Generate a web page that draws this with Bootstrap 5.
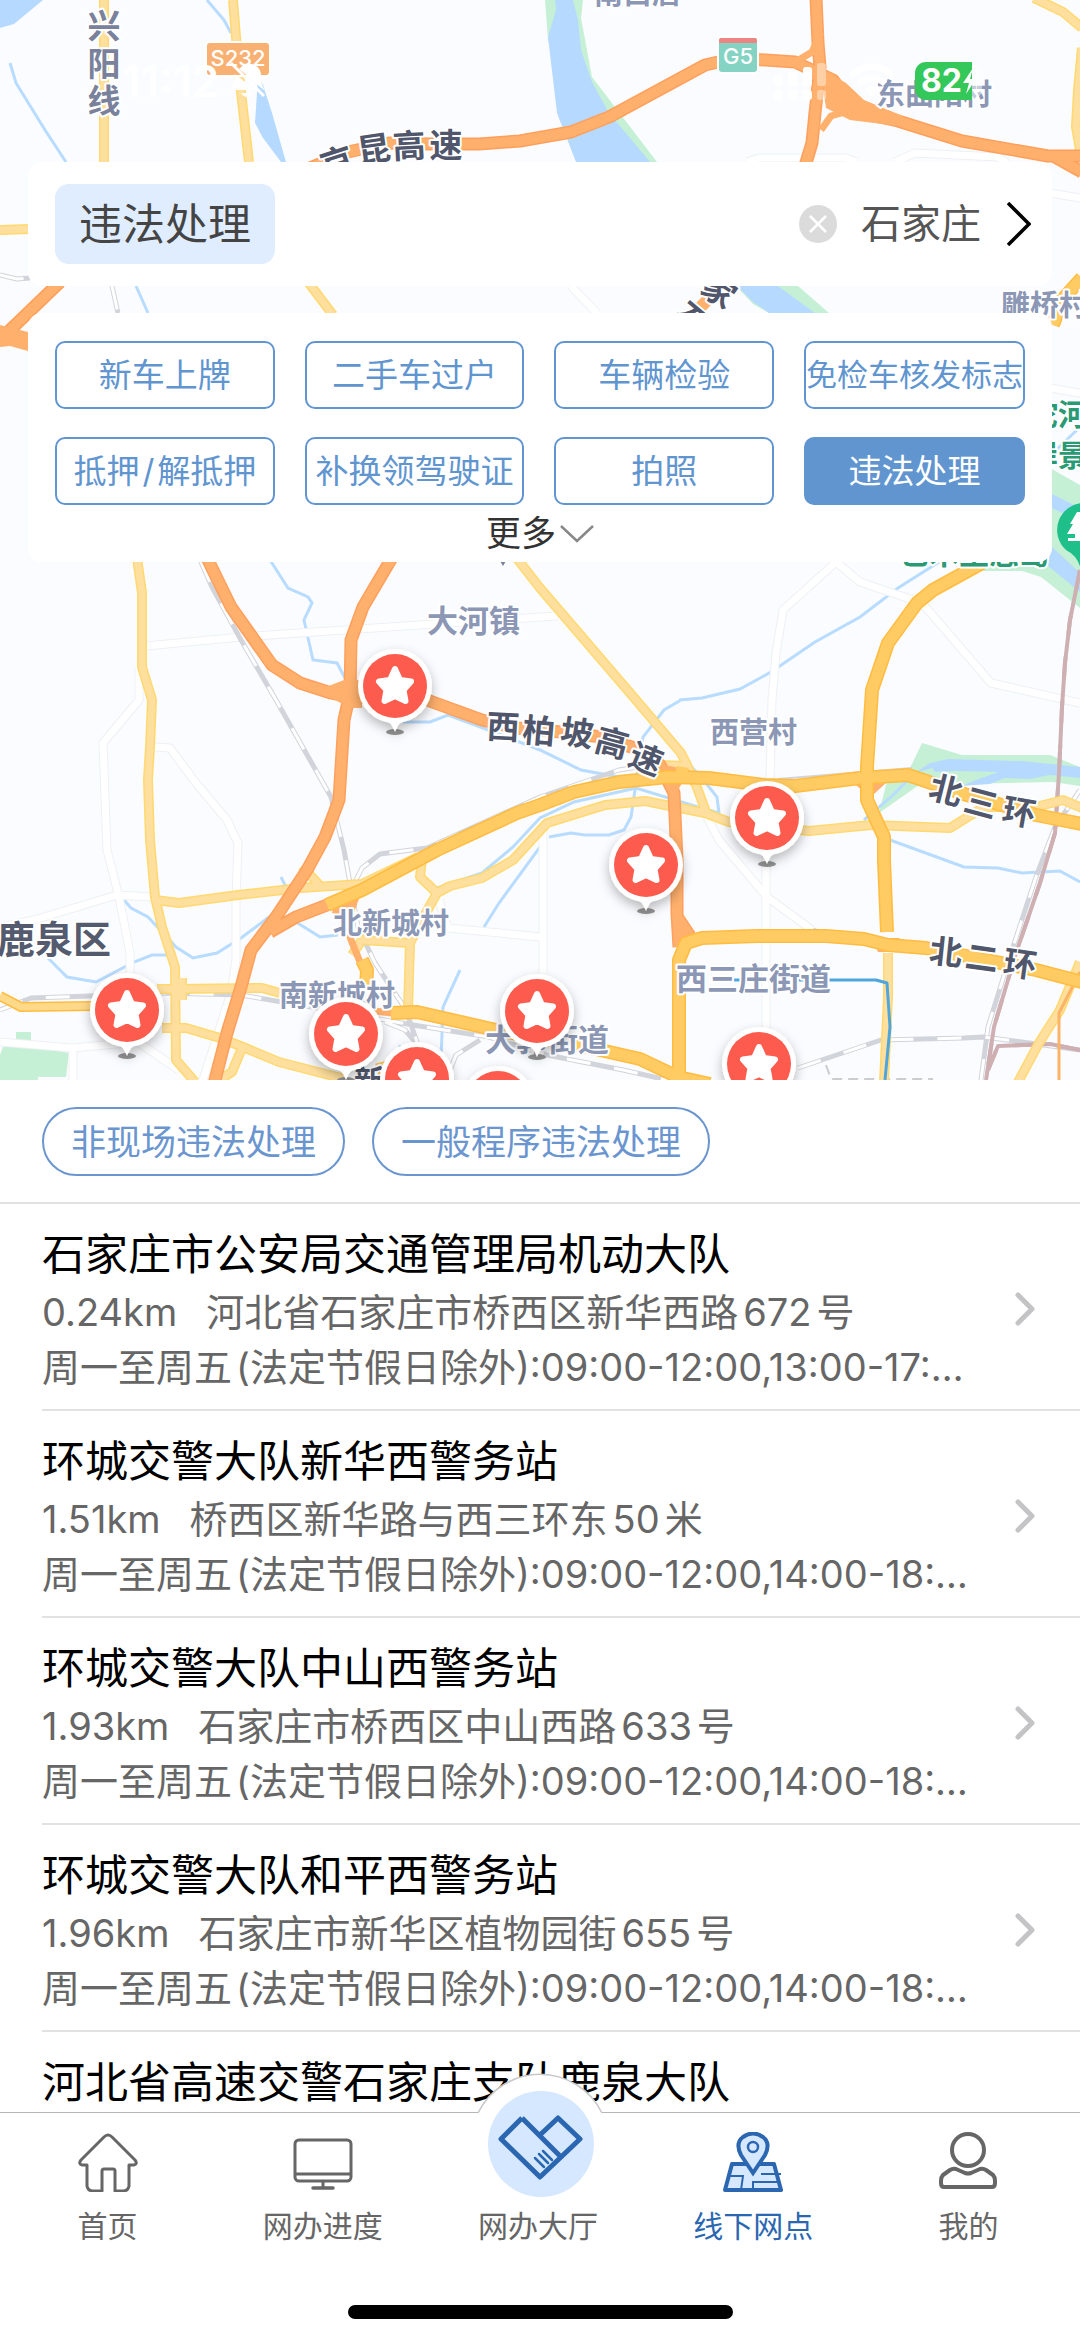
<!DOCTYPE html>
<html lang="zh-CN">
<head>
<meta charset="utf-8">
<meta name="viewport" content="width=device-width, initial-scale=1">
<title>线下网点</title>
<link href="https://cdn.jsdelivr.net/npm/bootstrap@5.3.0/dist/css/bootstrap.min.css" rel="stylesheet">
<style>
  :root { --accent: #6195d0; --deep: #2b67b1; --line: #e2e2e2; }
  body { font-family: Inter, "Noto Sans CJK SC", sans-serif; background: #fff; color: #000; }
  button { font-family: inherit; }

  .map-area { height: 1080px; background: #fbfcff; }
  .map-canvas { width: 100%; height: 100%; }

  .status-bar { height: 162px; padding: 0 98px 0 122px; color: #fff; }
  .status-time { font-size: 44px; line-height: 48px; font-weight: 600; }
  .status-signals { gap: 20px; }
  .battery { width: 67px; height: 38px; border-radius: 11px; background: linear-gradient(90deg, #34c759 57px, rgba(255,255,255,.5) 57px); font-size: 32px; line-height: 38px; font-weight: 700; padding-left: 6px; }

  .float-panel { margin: 0 28px; background: #fff; border-radius: 14px; padding: 0 27px; }
  .search-panel { height: 124px; padding-right: 21px; }
  .keyword { background: #e0edfe; color: #444; border-radius: 14px; font-size: 43px; line-height: 80px; padding: 0 24px; }
  .city-btn { color: #555; font-size: 40px; line-height: 60px; gap: 26px; }

  .filter-panel { margin-top: 27px; padding-top: 28px; }
  .filter-grid { display: grid; grid-template-columns: repeat(4, 1fr); gap: 28px 30px; }
  .filter-btn { height: 68px; padding: 0; border: 2px solid var(--accent); border-radius: 10px; color: var(--accent); background: #fff; font-size: 33px; line-height: 62px; white-space: nowrap; }
  .filter-btn.tight { font-size: 31px; }
  .filter-btn.active { background: var(--accent); color: #fff; border-color: var(--accent); }
  .slash { margin: 0 3px; }
  .more-btn { font-size: 35px; line-height: 57px; color: #333; }

  .kind-row { padding: 27px 42px 26px; gap: 27px; border-bottom: 2px solid var(--line); }
  .kind-btn { height: 69px; padding: 0 27px; border: 2px solid #6a95cf; border-radius: 35px; color: #6a95cf; font-size: 35px; line-height: 60px; }

  .office { padding-left: 42px; color: #000; }
  .office-in { padding: 19px 45px 14px 0; border-bottom: 2px solid var(--line); gap: 38px; }
  .office-name { font-size: 43px; line-height: 62px; }
  .office-line { font-size: 38px; line-height: 55px; color: #666; }
  .office-addr { margin-left: 29px; }
  .num { margin: 0 5px; }

  .tab-bar { height: 229px; border-top: 1px solid #b5b5b5; background: #fff; }
  .tab-row { padding-right: 4px; }
  .tab-link { flex: 1 1 0; padding-top: 19px; color: #666; font-size: 30px; line-height: 40px; gap: 14px; }
  .tab-link.active { color: var(--deep); }
  .tab-icon { width: 60px; height: 60px; }
  .hub-bump { position: absolute; left: 50%; top: -40px; margin-left: -70px; }
  .home-bar { width: 385px; height: 14px; border-radius: 7px; background: #000; margin-top: 59px; }

  .edge-light { stroke: #ffd970; } .fill-light { stroke: #ffdf9e; }
  .edge-gold { stroke: #ffbc40; } .fill-gold { stroke: #ffcb62; }
  .edge-hwy { stroke: #ff9f5c; } .fill-hwy { stroke: #ffb06c; }
  .edge-minor { stroke: #eef0f4; } .fill-minor { stroke: #fff; }
  .halo { paint-order: stroke; stroke: #fff; stroke-width: 4px; stroke-linejoin: round; font-family: "Noto Sans CJK SC", sans-serif; font-weight: 700; }
  .village { fill: #8b97b5; font-size: 29px; }
  .town { fill: #8b97b5; font-size: 31px; }
  .road-name { fill: #50566b; font-size: 33px; text-anchor: middle; }
  .scenic { fill: #2a9a74; font-size: 30px; }
  .sign-text { fill: #fff; font-size: 22px; text-anchor: middle; font-family: Inter, sans-serif; font-weight: 500; }
</style>
<script src="https://cdn.jsdelivr.net/npm/bootstrap@5.3.0/dist/js/bootstrap.bundle.min.js"></script>
</head>
<body>
<div class="vh-100 d-flex flex-column overflow-hidden">

  <section class="map-area position-relative flex-shrink-0 overflow-hidden">
    <svg class="map-canvas position-absolute top-0 start-0" viewBox="0 0 1080 1080" preserveAspectRatio="xMidYMin slice" aria-label="地图">
      <defs>
        <g id="minor">
          <path d="M146 646L241 637L344 630L557 616M139 667L139 700L103 743L107 850L119 897L130 953V983M155 747L170 748L196 783L227 820L238 843L236 900V960L231 993L203 1080M0 927L34 920L117 895L152 897"/>
          <path d="M836 562L783 610L776 653L772 700L770 780L766 860V1030M836 562L860 582L922 603L991 683L1080 703M707 817L719 840L767 897L812 930M543 830V973M439 900L448 928L540 937M0 1042L72 1048L138 1042L179 1070M73 1050V1080"/>
          <path d="M747 162L759 158H846L856 162M895 162L915 153L998 157L1008 164M1050 193L1080 198M571 286L597 313M1050 388L1080 393"/>
        </g>
        <g id="light">
          <path d="M104 0V162M233 0L236 37L240 83L249 162M308 282L333 315M515 556L540 588L636 700L681 753L687 765L698 790L707 815M0 230L30 229M1034 -2L1063 12L1082 28M1082 48L1078 90L1076 127L1080 150"/>
          <path d="M137 558L142 593V667L152 700L150 747L148 780L150 840L155 897L162 927L175 967L176 1060L195 1082"/>
          <path d="M155 900L179 903L238 895L300 888L362 884L418 857M302 866L322 888M422 858L420 877L437 893L422 920L410 943L362 940L352 955M410 943L408 1010M437 893L450 886L482 878L513 860L547 823L605 805L645 801L705 813L729 822L809 831L871 825L950 828L984 807L1036 807L1063 800L1082 808M660 765L687 766"/>
          <path d="M157 989H179L262 988L280 993M182 978V1000M162 1028H186L220 1038L243 1047L279 1062L345 1079M242 1048L232 1072L216 1082M888 953V997L884 1082M1080 962L1060 1010L1039 1043L1018 1082"/>
        </g>
        <g id="gold">
          <path d="M327 905L362 890L437 850L517 813L540 805L574 792L619 782L667 777L709 778L764 785L795 786L860 778L908 775L967 795L1036 815L1082 824"/>
          <path d="M982 563L933 590L917 603L888 643L872 690L867 767V800L884 837V860L887 932"/>
          <path d="M679 1082V960L686 943L702 938L757 936H826L864 939L888 945L926 948L1036 970L1082 982"/>
          <path d="M391 1013L417 1012L496 1030L578 1045L640 1059L678 1077L710 1084M362 960L367 970L366 990M382 1062L388 1084M1082 278L1062 300L1053 325"/>
        </g>
        <g id="hwy">
          <path d="M310 168L348 152L389 143L430 144H479L520 141L571 132L609 117L705 65L736 58L795 62L833 80L857 112L898 121L962 141L1048 156H1082M816 -2L818 43L820 67L815 113L812 143L805 166M1055 157L1082 172"/>
          <path d="M60 282L8 332M207 558L231 607L272 665L300 683L331 693L350 697L427 700L482 720L517 728L561 732L602 737L640 750L660 765L674 793L677 860V913L679 947M676 915L690 936"/>
          <path d="M393 556L363 607L351 640L350 693L344 720L339 800L325 837L307 870L276 917L251 950L241 987L227 1033L214 1084M270 932L296 917L327 905"/>
        </g>
        <g id="pin">
          <ellipse cy="46" rx="9" ry="3" fill="#949494"/>
          <g filter="url(#pinShadow)">
            <circle r="37" fill="#fff"/><path d="M-13 32Q-3 36 0 46Q3 36 13 32Z" fill="#fff"/>
          </g>
          <circle r="32" fill="#fc5b4d"/>
          <path d="M0 -17L5 -6L16 -4.500L8.500 4L10.500 15L0 10L-10.500 15L-8.500 4L-16 -4.500L-5 -6Z" fill="#fff" stroke="#fff" stroke-width="6" stroke-linejoin="round"/>
        </g>
        <filter id="pinShadow" x="-50%" y="-40%" width="200%" height="200%"><feDropShadow dx="0" dy="5" stdDeviation="6" flood-color="#000" flood-opacity=".28"/></filter>
      </defs>

      <!-- water and parks -->
      <g fill="#c6f0d5">
        <path d="M545 0H583L581 18L592 77L657 162H640L555 60L548 40Z"/>
        <path d="M736 286H798L829 313H769L753 304Z"/>
        <path d="M1050 468L1080 485V608L1041 577L1022 571H958L988 555L1050 507Z"/>
        <path d="M922 743L962 755H1050L1080 767V786L1053 782L919 785L879 813L888 777L910 768Z"/>
        <path d="M3 1047L31 1046L69 1053L66 1077H38V1080H0V1055ZM16 1032H31V1040H16Z"/>
      </g>
      <g fill="#b6daff">
        <path d="M0 0H43L14 24L0 28ZM258 78L255 123L263 138L281 162H286L272 113L263 85Z"/>
        <path d="M555 0L556 10L548 37L557 113L576 162H650L609 113L592 82L581 50L578 20L573 0Z"/>
        <path d="M737 286H778L815 313H769L753 302Z"/>
        <path d="M1050 493L1080 508V522L1050 507ZM1050 545L1080 573V592L1048 566Z"/>
        <path d="M915 773L930 763L948 759L1022 761L1080 767V778L1050 775L1030 779L1005 778L990 784L960 786L998 772L955 771L935 772L932 768Z"/>
      </g>
      <g fill="none" stroke="#b8dcff" stroke-width="3">
        <path d="M10 63L16 83L45 130L66 162M207 0L224 20L231 33M136 286L148 313M270 560L288 588L308 597L312 603L304 620L313 660L337 663L346 680M1080 427L1050 456"/>
        <path d="M124 900L131 908L148 917L176 947L193 958L217 953L241 938L269 917M48 958L67 977L96 982L134 962L152 955H176M281 877L290 895M296 922L320 937L338 935M441 1060L443 1007L460 970M484 927L499 903L540 847M437 888L482 873L513 847L540 818L574 802L636 788L698 807L719 813L717 797L705 782L681 755"/>
        <path d="M403 722H430L448 715L475 725L540 750L581 770L619 777M681 700L664 710L643 737L636 783L631 817L624 830L609 835H585L571 833L549 837M939 562L898 588L860 617L815 642L771 672L740 689L702 698L679 700M915 773L891 797L864 820M890 840L964 867L998 868L1022 873L1060 871L1080 882M812 928L824 934M400 1045V1080"/>
      </g>

      <!-- roads -->
      <g fill="none" stroke-linejoin="round">
        <use href="#minor" class="edge-minor" stroke-width="9"/><use href="#minor" class="fill-minor" stroke-width="7"/>
        <g stroke="#d2d4dc" stroke-width="5">
          <path id="railA" d="M112 286L118 313M200 560L212 587L241 640L276 700L331 797L344 850L358 927L375 963L406 1010L418 1045M0 275L17 279L30 278M0 1010L31 998L90 996L162 993L241 995L317 1008L413 1025L489 1037L547 1055L623 1070L667 1080M355 882L362 868L380 854L427 848L540 797L619 770L650 765M1080 790L1055 827L1036 877L1012 950L988 1027L981 1080M798 1068L881 1040L964 1038L984 1037L1022 1042L1080 1050M450 1070L456 1055L480 1040M385 1022L405 1030L418 1045"/>
          <path d="M778 779L912 768" stroke-width="2"/>
        </g>
        <use href="#railA" stroke="#fff" stroke-width="3" stroke-dasharray="24 24"/>
        <path id="railB" d="M1080 570L1070 620L1065 663L1062 707L1059 773L1055 833L1040 883L1016 953L994 1027L986 1080M1080 1050L1050 1044L998 1046L988 1070" stroke="#cfb0b2" stroke-width="4"/>
        <use href="#railB" stroke="#fff" stroke-width="2" stroke-dasharray="22 22"/>
        <path d="M826 1065L831 1079H933" stroke="#ccc" stroke-width="2" stroke-dasharray="10 6"/>
        <use href="#light" class="edge-light" stroke-width="10"/><use href="#light" class="fill-light" stroke-width="7"/>
        <path d="M0 996L21 1007L92 1006" class="edge-gold" stroke-width="10"/><path d="M0 996L21 1007L92 1006" stroke="#ffd98a" stroke-width="7"/>
        <path d="M733 980H876L887 983L890 1027L885 1080" stroke="#4ea6dc" stroke-width="3"/>
        <path d="M1080 972L1059 1013V1080" stroke="#fbb365" stroke-width="3"/>
        <use href="#hwy" class="edge-hwy" stroke-width="13"/><use href="#hwy" class="fill-hwy" stroke-width="10"/>
        <path d="M797 61L812 52L821 32M821 130L831 116L845 112M345 925L360 962M365 1010L392 1013" class="fill-hwy" stroke-width="7"/>
        <g fill="#ffb06c">
          <path d="M820 68L846 83L864 100L903 116L898 126L850 120L826 108Z"/><path d="M0 325L28 332V351L10 346L0 347Z"/>
          <path d="M326 687L344 680H362V708H350L335 700Z"/><path d="M336 895L364 885L352 918L332 913Z"/><path d="M856 785L886 783L874 794H866ZM872 938L900 938L890 952H878ZM665 765L690 770L678 790Z"/>
        </g>
        <use href="#gold" class="edge-gold" stroke-width="14"/><use href="#gold" class="fill-gold" stroke-width="11"/>
        <path d="M676 770L688 772" class="fill-gold" stroke-width="8"/>
      </g>

      <!-- shields and labels -->
      <rect x="206" y="42" width="64" height="34" rx="4" fill="#f8b073" stroke="#fff" stroke-width="2"/>
      <text class="sign-text" x="238" y="66">S232</text>
      <rect x="718" y="37" width="40" height="36" rx="4" fill="#84d3c3" stroke="#fff" stroke-width="2"/>
      <path d="M719 43V40Q719 38 721 38H755Q757 38 757 40V43Z" fill="#ed8683"/>
      <text class="sign-text" x="738" y="64">G5</text>

      <g class="halo">
        <g class="road-name">
          <g fill="#7a819b"><text x="104" y="38">兴</text><text x="104" y="76">阳</text><text x="104" y="113">线</text></g>
          <text transform="translate(337 162) rotate(-18)" y="12">京</text><text transform="translate(374 149) rotate(-8)" y="12">昆</text><text transform="translate(409 146) rotate(-3)" y="12">高</text><text x="446" y="157">速</text>
          <path d="M719 288L692 316" stroke="#ffb06c" stroke-width="12"/>
          <text transform="translate(719 291) rotate(35)" y="12">家</text><text transform="translate(692 320) rotate(40)" y="12">石</text>
          <text transform="translate(503 727) rotate(3)" y="12">西</text><text transform="translate(539 731) rotate(5)" y="12">柏</text><text transform="translate(577 733) rotate(8)" y="12">坡</text><text transform="translate(612 743) rotate(15)" y="12">高</text><text transform="translate(646 759) rotate(22)" y="12">速</text>
          <text transform="translate(946 790) rotate(14)" y="12">北</text><text transform="translate(981 803) rotate(15)" y="12">三</text><text transform="translate(1019 812) rotate(10)" y="12">环</text>
          <text transform="translate(946 952) rotate(6)" y="12">北</text><text transform="translate(982 958) rotate(8)" y="12">二</text><text transform="translate(1020 964) rotate(8)" y="12">环</text>
        </g>
        <g class="village">
          <text x="594" y="4">南白店</text><text x="876" y="105">东曲阳村</text><text x="1001" y="316">雕桥村</text>
          <text x="710" y="743">西营村</text><text x="333" y="934">北新城村</text><text x="279" y="1006">南新城村</text>
        </g>
        <g class="town">
          <text x="427" y="632">大河镇</text><text x="676" y="990">西三庄街道</text><text x="485" y="1051">大郭街道</text><text x="354" y="1092" fill="#50566b">新</text>
        </g>
        <text x="-3" y="953" fill="#555b6e" font-size="38">鹿泉区</text>
        <g class="scenic"><text x="1028" y="425">沱河</text><text x="1028" y="466">岸景</text><text x="899" y="564">艺术生态岛</text></g>
        <path d="M497 556H509L503 566Z" fill="#7a819b"/>
      </g>
      <path d="M1084 503A27 27 0 0 0 1066 550Q1078 556 1081 570H1084Z" fill="#1fbf8a"/>
      <path d="M1077 512L1070 524H1073L1067 534H1075V538H1068V541H1084V512Z" fill="#fff"/>

      <use href="#pin" x="395" y="686"/><use href="#pin" x="767" y="818"/><use href="#pin" x="646" y="865"/>
      <use href="#pin" x="127" y="1010"/><use href="#pin" x="537" y="1011"/><use href="#pin" x="346" y="1034"/>
      <use href="#pin" x="759" y="1064"/><use href="#pin" x="417" y="1079"/><use href="#pin" x="498" y="1103"/>
    </svg>

    <div class="position-relative">
      <header class="status-bar d-flex align-items-center justify-content-between">
        <div class="d-flex align-items-center gap-2">
          <span class="status-time">11:12</span>
          <svg width="40" height="40" viewBox="0 0 40 40" fill="#fff" aria-hidden="true"><path d="M12 8Q19 0 28 4Q35 8 34 18Q34 24 38 30L11 7ZM8 13Q7 24 3 29H28ZM14 32H26Q20 40 14 32Z"/><path d="M4 2L37 35" stroke="#fff" stroke-width="3"/></svg>
        </div>
        <div class="status-signals d-flex align-items-center">
          <svg width="56" height="40" viewBox="0 0 56 40" fill="#fff" aria-hidden="true"><rect x="1" y="14" width="8" height="11" rx="3"/><rect x="15" y="11" width="9" height="14" rx="3"/><rect x="30" y="6" width="9" height="19" rx="3"/><rect x="44" y="2" width="9" height="23" rx="3" opacity=".4"/><rect x="1" y="29" width="8" height="10" rx="3"/><rect x="15" y="29" width="9" height="10" rx="3"/><rect x="30" y="29" width="9" height="10" rx="3"/><rect x="44" y="29" width="9" height="10" rx="3" opacity=".4"/></svg>
          <svg width="46" height="36" viewBox="0 0 46 36" fill="none" stroke="#fff" stroke-width="6" aria-hidden="true"><path d="M2 13Q23 -6 44 13M10 21Q23 9 36 21"/><path d="M16 26Q23 20 30 26L23 34Z" fill="#fff" stroke="none"/></svg>
          <span class="battery d-flex align-items-center">82<svg width="14" height="26" viewBox="0 0 14 26" aria-hidden="true"><path d="M11 0L1 15H7L4 26L14 11H8Z" fill="#fff"/></svg></span>
        </div>
      </header>

      <div class="float-panel search-panel d-flex align-items-center">
        <span class="keyword">违法处理</span>
        <button type="button" class="btn border-0 p-0 ms-auto me-4 d-flex" aria-label="清除">
          <svg width="38" height="38" viewBox="0 0 38 38"><circle cx="19" cy="19" r="19" fill="#dbdbdb"/><path d="M11 11L27 27M27 11L11 27" stroke="#fff" stroke-width="2.500"/></svg>
        </button>
        <button type="button" class="btn city-btn border-0 p-0 d-flex align-items-center">石家庄
          <svg width="24" height="44" viewBox="0 0 24 44" fill="none" aria-hidden="true"><path d="M1 1L22 22L1 43" stroke="#000" stroke-width="3.500"/></svg>
        </button>
      </div>

      <div class="float-panel filter-panel">
        <div class="filter-grid">
          <button type="button" class="btn filter-btn">新车上牌</button>
          <button type="button" class="btn filter-btn">二手车过户</button>
          <button type="button" class="btn filter-btn">车辆检验</button>
          <button type="button" class="btn filter-btn tight">免检车核发标志</button>
          <button type="button" class="btn filter-btn">抵押<span class="slash">/</span>解抵押</button>
          <button type="button" class="btn filter-btn">补换领驾驶证</button>
          <button type="button" class="btn filter-btn">拍照</button>
          <button type="button" class="btn filter-btn active">违法处理</button>
        </div>
        <button type="button" class="btn more-btn border-0 p-0 d-flex align-items-center gap-1 mx-auto">更多
          <svg width="34" height="18" viewBox="0 0 34 18" fill="none" aria-hidden="true"><path d="M1 1L17 16L33 1" stroke="#888" stroke-width="2.500"/></svg>
        </button>
      </div>
    </div>
  </section>

  <div class="kind-row d-flex flex-shrink-0">
    <button type="button" class="btn kind-btn">非现场违法处理</button>
    <button type="button" class="btn kind-btn">一般程序违法处理</button>
  </div>

  <main class="flex-grow-1 overflow-hidden">
    <a href="#" class="office d-block text-decoration-none">
      <div class="office-in d-flex align-items-center">
        <div class="flex-grow-1 overflow-hidden">
          <div class="office-name">石家庄市公安局交通管理局机动大队</div>
          <div class="office-line text-truncate">0.24km<span class="office-addr">河北省石家庄市桥西区新华西路<span class="num">672</span>号</span></div>
          <div class="office-line text-truncate">周一至周五<span class="ps-1">(法定节假日除外):09:00-12:00,13:00-17:00</span></div>
        </div>
        <svg class="flex-shrink-0" width="20" height="34" viewBox="0 0 20 34" fill="none" aria-hidden="true"><path d="M3 3L17 17L3 31" stroke="#c4c4c6" stroke-width="5" stroke-linecap="round" stroke-linejoin="round"/></svg>
      </div>
    </a>
    <a href="#" class="office d-block text-decoration-none">
      <div class="office-in d-flex align-items-center">
        <div class="flex-grow-1 overflow-hidden">
          <div class="office-name">环城交警大队新华西警务站</div>
          <div class="office-line text-truncate">1.51km<span class="office-addr">桥西区新华路与西三环东<span class="num">50</span>米</span></div>
          <div class="office-line text-truncate">周一至周五<span class="ps-1">(法定节假日除外):09:00-12:00,14:00-18:00</span></div>
        </div>
        <svg class="flex-shrink-0" width="20" height="34" viewBox="0 0 20 34" fill="none" aria-hidden="true"><path d="M3 3L17 17L3 31" stroke="#c4c4c6" stroke-width="5" stroke-linecap="round" stroke-linejoin="round"/></svg>
      </div>
    </a>
    <a href="#" class="office d-block text-decoration-none">
      <div class="office-in d-flex align-items-center">
        <div class="flex-grow-1 overflow-hidden">
          <div class="office-name">环城交警大队中山西警务站</div>
          <div class="office-line text-truncate">1.93km<span class="office-addr">石家庄市桥西区中山西路<span class="num">633</span>号</span></div>
          <div class="office-line text-truncate">周一至周五<span class="ps-1">(法定节假日除外):09:00-12:00,14:00-18:00</span></div>
        </div>
        <svg class="flex-shrink-0" width="20" height="34" viewBox="0 0 20 34" fill="none" aria-hidden="true"><path d="M3 3L17 17L3 31" stroke="#c4c4c6" stroke-width="5" stroke-linecap="round" stroke-linejoin="round"/></svg>
      </div>
    </a>
    <a href="#" class="office d-block text-decoration-none">
      <div class="office-in d-flex align-items-center">
        <div class="flex-grow-1 overflow-hidden">
          <div class="office-name">环城交警大队和平西警务站</div>
          <div class="office-line text-truncate">1.96km<span class="office-addr">石家庄市新华区植物园街<span class="num">655</span>号</span></div>
          <div class="office-line text-truncate">周一至周五<span class="ps-1">(法定节假日除外):09:00-12:00,14:00-18:00</span></div>
        </div>
        <svg class="flex-shrink-0" width="20" height="34" viewBox="0 0 20 34" fill="none" aria-hidden="true"><path d="M3 3L17 17L3 31" stroke="#c4c4c6" stroke-width="5" stroke-linecap="round" stroke-linejoin="round"/></svg>
      </div>
    </a>
    <a href="#" class="office d-block text-decoration-none">
      <div class="office-in d-flex align-items-center border-0 pb-0">
        <div class="office-name">河北省高速交警石家庄支队鹿泉大队</div>
      </div>
    </a>
  </main>

  <footer class="tab-bar position-relative flex-shrink-0">
    <svg class="hub-bump" width="140" height="124" viewBox="0 0 140 124" aria-hidden="true">
      <path d="M8 40A69 69 0 0 1 132 40V44H8Z" fill="#fff"/>
      <path d="M8 40A69 69 0 0 1 132 40" fill="none" stroke="#c8c8c8" stroke-width="1.500"/>
      <circle cx="71" cy="71" r="53" fill="#d6e8ff"/>
      <g fill="none" stroke="#2b67b1" stroke-linejoin="round">
        <path d="M52 45L31 66L70 104L110 66L88 45L71 61M52 45L91 84" stroke-width="5"/>
        <path d="M65 85L74 94M69 81L78 90M73 78L82 87" stroke-width="2.500" stroke-linecap="round"/>
      </g>
    </svg>
    <nav class="tab-row d-flex position-relative">
      <a href="#" class="tab-link d-flex flex-column align-items-center text-decoration-none">
        <svg class="tab-icon" viewBox="0 0 60 60" fill="none" stroke="#666" stroke-width="3" stroke-linejoin="round" aria-hidden="true"><path d="M9 33H4Q0 32 3 28L26 5Q30 1 34 5L57 28Q60 32 56 33H51V54Q50 59 45 59H37V39Q37 37 35 37H26Q24 37 24 39V59H15Q10 59 9 54Z"/></svg>首页</a>
      <a href="#" class="tab-link d-flex flex-column align-items-center text-decoration-none">
        <svg class="tab-icon" viewBox="0 0 60 60" fill="none" stroke="#666" stroke-width="3" aria-hidden="true"><rect x="2" y="8" width="56" height="41" rx="4"/><path d="M2 42H58M30 49V56"/><path d="M20 56H40" stroke-width="3.500" stroke-linecap="round"/></svg>网办进度</a>
      <a href="#" class="tab-link d-flex flex-column align-items-center text-decoration-none">
        <span class="tab-icon"></span>网办大厅</a>
      <a href="#" class="tab-link active d-flex flex-column align-items-center text-decoration-none">
        <svg class="tab-icon" viewBox="0 0 60 60" fill="#d6e8ff" stroke="#2b67b1" aria-hidden="true"><path d="M9 32H51L58 58H2Z" stroke-width="4" stroke-linejoin="round"/><path d="M6 44H20L18 58M58 42H38M57 50H30V58" fill="none" stroke-width="2"/><path d="M30 41L18 23Q12 11 20 5Q30 -2 40 5Q48 11 42 23Z" stroke-width="4"/><circle cx="30" cy="15" r="5" stroke-width="2.500"/></svg>线下网点</a>
      <a href="#" class="tab-link d-flex flex-column align-items-center text-decoration-none">
        <svg class="tab-icon" viewBox="0 0 60 60" fill="none" stroke="#666" stroke-width="4" aria-hidden="true"><circle cx="30" cy="18" r="16"/><path d="M18 37Q15 36 12 38L5 43Q3 45 3 49V51Q3 55 6 55H54Q57 55 57 51V49Q57 45 55 43L48 38Q45 36 42 37L33 41Q30 42 27 41Z" stroke-linejoin="round"/></svg>我的</a>
    </nav>
    <div class="home-bar mx-auto"></div>
  </footer>
</div>
</body>
</html>
